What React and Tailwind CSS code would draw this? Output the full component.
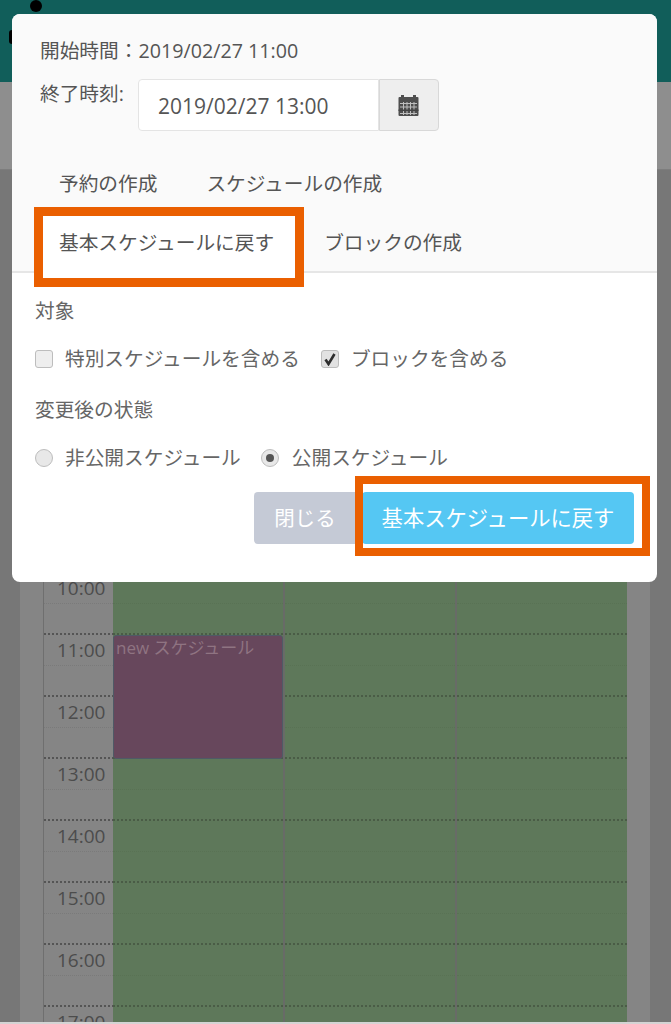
const fontStack = { fontFamily: '"Open Sans", "Noto Sans CJK JP", sans-serif' };

const hours = [4, 5, 6, 7, 8, 9, 10, 11, 12, 13, 14, 15, 16, 17];

function CalendarIcon() {
  return (
    <svg width="21" height="22" viewBox="0 0 21 22" fill="none">
      <rect x="0.5" y="3" width="20" height="19" rx="1" fill="#4f4f4f" />
      <rect x="3" y="1" width="3" height="4" fill="#4f4f4f" />
      <rect x="15" y="1" width="3" height="4" fill="#4f4f4f" />
      <g stroke="#eee" strokeWidth="1" opacity="0.7">
        <path d="M2 9.5h17M2 13h17M2 16.500h17M2 19.500h17" />
        <path d="M5.500 8v13M9 8v13M12.500 8v13M16 8v13" />
      </g>
      <rect x="0.5" y="15.500" width="20" height="1.500" fill="#444" />
    </svg>
  );
}

function HourRow({ hour }) {
  return (
    <div className="flex h-[62px] shrink-0">
      <div className="w-[69px] shrink-0 text-[19px] leading-[26px] text-[#4c4c4c]">
        <div className="h-[2px] bg-[repeating-linear-gradient(90deg,#555555_0_2px,transparent_2px_4px)]"></div>
        <div className="h-[31px] border-b border-dotted border-[#7a7a7a] pt-[2px] pl-[13px]">{hour}:00</div>
      </div>
      {[0, 1, 2].map((col) => (
        <div key={col} className="flex-1 border-r-2 border-[#686b67] bg-[#5e785a] last:border-r-0">
          <div className="h-[2px] bg-[repeating-linear-gradient(90deg,#4a5c46_0_2px,transparent_2px_4px)]"></div>
          <div className="h-[31px] border-b border-dotted border-[#597254]"></div>
        </div>
      ))}
    </div>
  );
}

function Check({ checked }) {
  return (
    <span className={`flex h-[18px] w-[18px] shrink-0 items-center justify-center rounded-[3px] border border-[#bdbdbd] ${checked ? 'bg-[#e2e2e2]' : 'bg-[#eeeeee]'}`}>
      {checked && (
        <svg width="14" height="14" viewBox="0 0 14 14">
          <path d="M2.500 7.500l3 4.500 6-10" fill="none" stroke="#2f2f2f" strokeWidth="2.600" />
        </svg>
      )}
    </span>
  );
}

function Radio({ checked }) {
  return (
    <span className="flex h-[18px] w-[18px] shrink-0 items-center justify-center rounded-full border border-[#bdbdbd] bg-[#e8e8e8]">
      {checked && <span className="h-[8px] w-[8px] rounded-full bg-[#555]"></span>}
    </span>
  );
}

export default function App() {
  return (
    <div className="relative flex h-[1024px] w-[671px] flex-col overflow-hidden bg-[#858585]" style={fontStack}>
      <div className="h-[82px] shrink-0 bg-[#115e5a]"></div>
      <div className="h-[88px] shrink-0 border-b border-[#7d7d7d] bg-[#8e8e8e]"></div>

      <div className="flex min-h-0 flex-1">
        <div className="w-[20px] shrink-0 bg-[#777777]"></div>
        <div className="w-[23px] shrink-0"></div>
        <div className="relative w-[584px] min-w-0 shrink-0 overflow-hidden border-l border-[#6f6f6f] pt-[29px]">
          {hours.map((h) => (
            <HourRow key={h} hour={h} />
          ))}
          <div className="absolute left-[69px] top-[465px] h-[124px] w-[170px] rounded-[3px] border border-[#4f5a66] bg-[#67475c] px-[2px] text-[17px] leading-[24px] text-[#8f7482]">
            new スケジュール
          </div>
        </div>
        <div className="w-[23px] shrink-0"></div>
        <div className="flex-1 bg-[#777777]"></div>
      </div>
      <div className="h-[2px] shrink-0 bg-[#d4d4d4]"></div>

      {/* stray dots peeking out above the dialog */}
      <div className="absolute left-[30px] top-0 h-[12px] w-[12px] rounded-full bg-black"></div>
      <div className="absolute left-[9px] top-[30px] h-[14px] w-[6px] rounded-full bg-black"></div>

      {/* dialog */}
      <div className="absolute left-[12px] top-[14px] flex h-[568px] w-[645px] flex-col overflow-hidden rounded-[8px] bg-white text-[19.700px] text-[#555]">
        <div className="h-[259px] shrink-0 border-b-2 border-[#e6e6e6] bg-[#fafafa]">
          <div className="px-[28px] pt-[23px] leading-[28px]">開始時間：2019/02/27 11:00</div>
          <div className="mt-[14px] flex items-start pl-[28px]">
            <span className="w-[99px] pt-[2px] leading-[26px]">終了時刻:</span>
            <div className="-ml-px flex h-[52px] w-[301px]">
              <div className="flex flex-1 items-center rounded-l-[4px] border border-[#e4e4e4] bg-white pt-[3px] pl-[19px] text-[21px]">2019/02/27 13:00</div>
              <div className="flex w-[60px] items-center justify-center rounded-r-[4px] border border-[#d8d8d8] bg-[#eeeeee] pr-[2px]">
                <CalendarIcon />
              </div>
            </div>
          </div>
          <div className="mt-[39px] flex gap-[49px] pl-[47px] leading-[28px]">
            <span>予約の作成</span>
            <span>スケジュールの作成</span>
          </div>
          <div className="mt-[31px] flex gap-[50px] pl-[47px] leading-[28px]">
            <span className="relative z-10">基本スケジュールに戻す</span>
            <span>ブロックの作成</span>
          </div>
        </div>

        <div className="flex flex-1 flex-col px-[23px]">
          <div className="mt-[24px] leading-[28px] text-[#666]">対象</div>
          <div className="mt-[20px] flex items-center leading-[28px] text-[#666]">
            <Check />
            <span className="ml-[12px]">特別スケジュールを含める</span>
            <span className="ml-[21px]"><Check checked /></span>
            <span className="ml-[12px]">ブロックを含める</span>
          </div>
          <div className="mt-[23px] leading-[28px] text-[#666]">変更後の状態</div>
          <div className="mt-[20px] flex items-center leading-[28px] text-[#666]">
            <Radio />
            <span className="ml-[12px]">非公開スケジュール</span>
            <span className="ml-[20px]"><Radio checked /></span>
            <span className="ml-[13px]">公開スケジュール</span>
          </div>
          <div className="mt-[20px] flex justify-end">
            <button className="h-[52px] w-[108px] rounded-l-[4px] bg-[#c5cad6] pr-[6px] text-[20.500px] text-white">閉じる</button>
            <button className="h-[52px] w-[272px] rounded-[4px] bg-[#55c7f3] text-[21.300px] text-white">基本スケジュールに戻す</button>
          </div>
        </div>

        {/* white patch behind the highlighted tab, hides the tab rule */}
        <div className="absolute left-[31px] top-[202px] h-[62px] w-[252px] bg-white"></div>
      </div>

      {/* orange callouts drawn over the screenshot */}
      <div className="absolute left-[34px] top-[207px] h-[80px] w-[270px] border-[9px] border-[#ea5f00]"></div>
      <div className="absolute left-[355px] top-[476px] h-[80px] w-[295px] border-[8px] border-[#ea5f00]"></div>
    </div>
  );
}
